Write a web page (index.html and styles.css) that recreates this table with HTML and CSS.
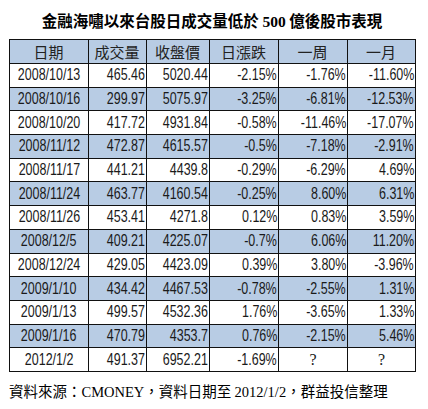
FILE: index.html
```html
<!DOCTYPE html>
<html lang="zh-Hant">
<head>
    <meta charset="UTF-8">
    <title>金融海嘯以來台股日成交量低於 500 億後股市表現</title>
    <link rel="stylesheet" href="styles.css">
</head>
<body>
    <div class="chart">
        <h1 class="title">金融海嘯以來台股日成交量低於 <span class="num">500</span> 億後股市表現</h1>
        <table class="stats">
            <colgroup>
                <col class="c-date">
                <col class="c-vol">
                <col class="c-close">
                <col class="c-day">
                <col class="c-week">
                <col class="c-month">
            </colgroup>
            <thead>
                <tr>
                    <th>日期</th>
                    <th>成交量</th>
                    <th>收盤價</th>
                    <th>日漲跌</th>
                    <th>一周</th>
                    <th>一月</th>
                </tr>
            </thead>
            <tbody>
                <tr><td class="date"><span class="v">2008/10/13</span></td><td><span class="v">465.46</span></td><td><span class="v">5020.44</span></td><td><span class="v">-2.15%</span></td><td><span class="v">-1.76%</span></td><td><span class="v">-11.60%</span></td></tr>
                <tr class="alt"><td class="date"><span class="v">2008/10/16</span></td><td><span class="v">299.97</span></td><td><span class="v">5075.97</span></td><td><span class="v">-3.25%</span></td><td><span class="v">-6.81%</span></td><td><span class="v">-12.53%</span></td></tr>
                <tr><td class="date"><span class="v">2008/10/20</span></td><td><span class="v">417.72</span></td><td><span class="v">4931.84</span></td><td><span class="v">-0.58%</span></td><td><span class="v">-11.46%</span></td><td><span class="v">-17.07%</span></td></tr>
                <tr class="alt"><td class="date"><span class="v">2008/11/12</span></td><td><span class="v">472.87</span></td><td><span class="v">4615.57</span></td><td><span class="v">-0.5%</span></td><td><span class="v">-7.18%</span></td><td><span class="v">-2.91%</span></td></tr>
                <tr><td class="date"><span class="v">2008/11/17</span></td><td><span class="v">441.21</span></td><td><span class="v">4439.8</span></td><td><span class="v">-0.29%</span></td><td><span class="v">-6.29%</span></td><td><span class="v">4.69%</span></td></tr>
                <tr class="alt"><td class="date"><span class="v">2008/11/24</span></td><td><span class="v">463.77</span></td><td><span class="v">4160.54</span></td><td><span class="v">-0.25%</span></td><td><span class="v">8.60%</span></td><td><span class="v">6.31%</span></td></tr>
                <tr><td class="date"><span class="v">2008/11/26</span></td><td><span class="v">453.41</span></td><td><span class="v">4271.8</span></td><td><span class="v">0.12%</span></td><td><span class="v">0.83%</span></td><td><span class="v">3.59%</span></td></tr>
                <tr class="alt"><td class="date"><span class="v">2008/12/5</span></td><td><span class="v">409.21</span></td><td><span class="v">4225.07</span></td><td><span class="v">-0.7%</span></td><td><span class="v">6.06%</span></td><td><span class="v">11.20%</span></td></tr>
                <tr><td class="date"><span class="v">2008/12/24</span></td><td><span class="v">429.05</span></td><td><span class="v">4423.09</span></td><td><span class="v">0.39%</span></td><td><span class="v">3.80%</span></td><td><span class="v">-3.96%</span></td></tr>
                <tr class="alt"><td class="date"><span class="v">2009/1/10</span></td><td><span class="v">434.42</span></td><td><span class="v">4467.53</span></td><td><span class="v">-0.78%</span></td><td><span class="v">-2.55%</span></td><td><span class="v">1.31%</span></td></tr>
                <tr><td class="date"><span class="v">2009/1/13</span></td><td><span class="v">499.57</span></td><td><span class="v">4532.36</span></td><td><span class="v">1.76%</span></td><td><span class="v">-3.65%</span></td><td><span class="v">1.33%</span></td></tr>
                <tr class="alt"><td class="date"><span class="v">2009/1/16</span></td><td><span class="v">470.79</span></td><td><span class="v">4353.7</span></td><td><span class="v">0.76%</span></td><td><span class="v">-2.15%</span></td><td><span class="v">5.46%</span></td></tr>
                <tr><td class="date"><span class="v">2012/1/2</span></td><td><span class="v">491.37</span></td><td><span class="v">6952.21</span></td><td><span class="v">-1.69%</span></td><td class="unknown">?</td><td class="unknown">?</td></tr>
            </tbody>
        </table>
        <p class="source">資料來源：<span class="latin">CMONEY</span>，資料日期至 <span class="latin">2012/1/2</span>，群益投信整理</p>
    </div>
</body>
</html>
```

FILE: styles.css
```css
body {
    margin: 0;
    background: #fff;
    color: #000;
    font-family: "Noto Sans CJK TC", sans-serif;
}
.chart {
    width: 428px;
    height: 409px;
}
.title {
    margin: 0;
    height: 39px;
    line-height: 40px;
    text-align: center;
    font-size: 15.5px;
    font-weight: bold;
    padding-right: 4px;
}
.title .num {
    font-family: "Liberation Serif", serif;
}
.stats {
    margin-left: 9px;
    width: 406px;
    border-collapse: collapse;
    table-layout: fixed;
}
.c-date { width: 79px; }
.c-vol { width: 58px; }
.c-close { width: 63px; }
.c-day { width: 69px; }
.c-week { width: 69px; }
.c-month { width: 68px; }
.stats th,
.stats td {
    border: 1px solid #111;
    padding: 0 1px 0 0;
    white-space: nowrap;
}
.stats th {
    height: 23px;
    background-color: #b8cce4;
    font-weight: normal;
    font-size: 15px;
    text-align: center;
    color: #222;
}
.stats td {
    height: 22.7px;
    line-height: 18px;
    font-family: "Liberation Sans", sans-serif;
    font-size: 16px;
    text-align: right;
    color: #1a1a1a;
}
.stats tr.alt td {
    background-color: #b8cce4;
}
/* narrow digits, like the spreadsheet's MingLiU */
.v {
    display: inline-block;
    margin-left: -14px;
    transform: scaleX(0.78);
    transform-origin: right center;
}
.stats td.date,
.stats td.unknown {
    text-align: center;
    padding: 0;
}
.stats td.date .v {
    margin: 0 -10px;
    transform-origin: center;
}
.stats td.unknown {
    font-family: "Liberation Serif", serif;
    font-size: 16px;
}
.source {
    margin: 9px 0 0 9px;
    font-size: 14.5px;
    line-height: 20px;
}
.source .latin {
    font-family: "Liberation Serif", serif;
}
```
